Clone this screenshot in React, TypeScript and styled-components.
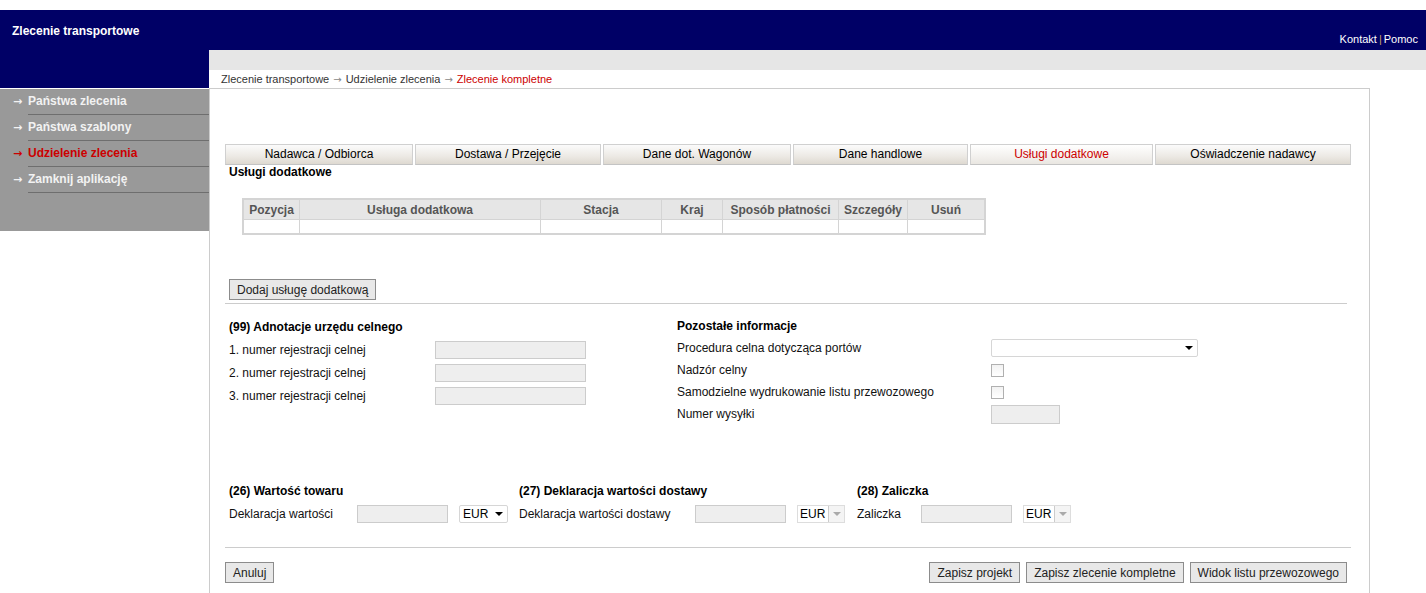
import styled, {createGlobalStyle} from 'styled-components';

const GlobalStyle = createGlobalStyle`
  html, body {
    margin: 0;
    padding: 0;
    background: #fff;
  }
  body {
    font-family: "Liberation Sans", Arial, sans-serif;
    font-size: 12px;
    color: #000;
  }
`;

const NAVY = '#000066';
const RED = '#cc0000';

const Page = styled.div`
  padding-top: 10px;
  min-height: 583px;
  display: grid;
  grid-template-columns: 209px 1fr;
  grid-template-rows: 40px 20px 18px 1fr;
`;

const Brand = styled.div`
  grid-row: 1 / 4;
  background: ${NAVY};
  color: #fff;
  font-weight: bold;
  padding: 14px 0 0 12px;
  line-height: 14px;
`;

const TopBar = styled.div`
  background: ${NAVY};
  display: flex;
  justify-content: flex-end;
  align-items: flex-end;
  padding: 0 8px 4px 0;
  color: #fff;
  font-size: 11px;
  line-height: 13px;
`;

const TopLink = styled.span`
  color: #fff;
`;

const Pipe = styled.span`
  color: #c8a060;
  margin: 0 2px;
`;

const GrayBar = styled.div`
  background: #e6e6e6;
`;

const Breadcrumb = styled.div`
  padding-left: 12px;
  font-size: 11px;
  line-height: 18px;
  color: #333;
`;

const Crumb = styled.span<{current?: boolean}>`
  color: ${p => (p.current ? RED : '#333')};
`;

const CrumbArrow = styled.span`
  font-family: "DejaVu Sans", sans-serif;
  font-size: 10px;
  color: #888;
  margin: 0 4px;
`;

const Sidebar = styled.nav`
  align-self: start;
  background: #999;
  border-top: 1px solid #fff;
  height: 142px;
`;

const MenuItem = styled.div<{active?: boolean}>`
  display: flex;
  height: 26px;
  padding-left: 13px;
  color: ${p => (p.active ? RED : '#f2f2f2')};
  font-weight: bold;
`;

const MenuArrow = styled.span`
  width: 15px;
  line-height: 25px;
  font-family: "DejaVu Sans", sans-serif;
  font-size: 11px;
`;

const MenuLabel = styled.span`
  flex: 1;
  line-height: 25px;
  border-bottom: 1px solid #6e6e6e;
`;

const Content = styled.main`
  box-sizing: border-box;
  width: 1161px;
  border: 1px solid #ccc;
  border-bottom: none;
  padding: 55px 17px 0 15px;
`;

const Tabs = styled.div`
  display: flex;
  gap: 2px;
`;

const Tab = styled.div<{w: number; active?: boolean}>`
  box-sizing: border-box;
  width: ${p => p.w}px;
  height: 21px;
  border: 1px solid #d0d0d0;
  border-bottom-color: #c4c4c4;
  background: ${p =>
    p.active
      ? 'linear-gradient(#ffffff, #f3f1ee 60%, #e9e6e1)'
      : 'linear-gradient(#fbfbfb, #ece9e4 60%, #ded9d1)'};
  color: ${p => (p.active ? RED : '#000')};
  text-align: center;
  line-height: 19px;
`;

const SectionTitle = styled.div`
  font-weight: bold;
  line-height: 14px;
  padding-left: 4px;
`;

const Table = styled.table`
  margin: 19px 0 0 17px;
  border-collapse: collapse;
  border: 2px solid #d4d4d4;
  table-layout: fixed;
`;

const Th = styled.th<{w: number}>`
  width: ${p => p.w}px;
  height: 19px;
  padding: 0;
  background: #e6e6e6;
  border: 1px solid #d4d4d4;
  color: #555;
  font-weight: bold;
  font-size: 12px;
`;

const Td = styled.td`
  height: 13px;
  padding: 0;
  border: 1px solid #d4d4d4;
`;

const Button = styled.button`
  box-sizing: border-box;
  height: 21px;
  padding: 0 7px;
  background: #e8e8e8;
  border: 1px solid #8c8c8c;
  border-radius: 0;
  font-family: inherit;
  font-size: 12px;
  color: #222;
`;

const AddRow = styled.div`
  margin-top: 44px;
  padding-left: 4px;
`;

const Rule = styled.hr<{w: number}>`
  width: ${p => p.w}px;
  margin: 0;
  border: none;
  border-top: 1px solid #ccc;
`;

const Columns = styled.div`
  display: grid;
  grid-template-columns: 448px 1fr;
  padding: 11px 0 0 4px;
`;

const Fields = styled.div<{label: number; row: number}>`
  display: grid;
  grid-template-columns: ${p => p.label}px auto;
  grid-auto-rows: ${p => p.row}px;
  align-items: center;
  justify-items: start;
`;

const FieldsTitle = styled.div`
  grid-column: 1 / 3;
  font-weight: bold;
`;

const Label = styled.span`
  color: #111;
  white-space: nowrap;
`;

const TextInput = styled.div<{w: number}>`
  box-sizing: border-box;
  width: ${p => p.w}px;
  height: 18px;
  background: #eee;
  border: 1px solid #ccc;
`;

const Select = styled.div<{w: number}>`
  box-sizing: border-box;
  width: ${p => p.w}px;
  height: 18px;
  display: flex;
  align-items: center;
  justify-content: space-between;
  background: #fff;
  border: 1px solid #d6d6d6;
  border-radius: 2px;
  padding: 0 4px 0 3px;
`;

const Caret = styled.span<{muted?: boolean}>`
  width: 0;
  height: 0;
  border-left: 4px solid transparent;
  border-right: 4px solid transparent;
  border-top: 4px solid ${p => (p.muted ? '#aaa' : '#000')};
`;

const MutedSelect = styled.div`
  display: flex;
  align-items: center;
  height: 18px;
  width: 48px;
  box-sizing: border-box;
  border: 1px solid #ddd;
  padding-left: 2px;
  background: #fff;
`;

const CaretBox = styled.span`
  margin-left: auto;
  width: 16px;
  height: 16px;
  box-sizing: border-box;
  border-left: 1px solid #ccc;
  background: #f4f4f4;
  display: flex;
  align-items: center;
  justify-content: center;
`;

const Checkbox = styled.span`
  box-sizing: border-box;
  width: 13px;
  height: 13px;
  border: 1px solid #b0b0b0;
  background: linear-gradient(#f2f2f2, #ffffff);
`;

const ValueRow = styled.div`
  display: flex;
  padding: 56px 0 0 4px;
`;

const ValueGroup = styled.div`
  display: grid;
  grid-template-rows: 20px 26px;
  align-items: center;
  margin-right: 12px;
`;

const ValueFields = styled.div<{label: number}>`
  display: grid;
  grid-template-columns: ${p => p.label}px 90px 48px;
  column-gap: 12px;
  align-items: center;
  & > :first-child {
    margin-right: -12px;
  }
`;

const Footer = styled.div`
  display: flex;
  justify-content: space-between;
  padding: 14px 5px 0 0;
`;

const FooterRight = styled.div`
  display: flex;
  gap: 6px;
`;

const tabs = [
  {label: 'Nadawca / Odbiorca', w: 188},
  {label: 'Dostawa / Przejęcie', w: 186},
  {label: 'Dane dot. Wagonów', w: 188},
  {label: 'Dane handlowe', w: 175},
  {label: 'Usługi dodatkowe', w: 183, active: true},
  {label: 'Oświadczenie nadawcy', w: 196},
];

const columns = [
  {label: 'Pozycja', w: 55},
  {label: 'Usługa dodatkowa', w: 240},
  {label: 'Stacja', w: 120},
  {label: 'Kraj', w: 60},
  {label: 'Sposób płatności', w: 115},
  {label: 'Szczegóły', w: 68},
  {label: 'Usuń', w: 76},
];

const menu = [
  {label: 'Państwa zlecenia'},
  {label: 'Państwa szablony'},
  {label: 'Udzielenie zlecenia', active: true},
  {label: 'Zamknij aplikację'},
];

export default function App() {
  return (
    <>
      <GlobalStyle />
      <Page>
        <Brand>Zlecenie transportowe</Brand>
        <TopBar>
          <TopLink>Kontakt</TopLink>
          <Pipe>|</Pipe>
          <TopLink>Pomoc</TopLink>
        </TopBar>
        <GrayBar />
        <Breadcrumb>
          <Crumb>Zlecenie transportowe</Crumb>
          <CrumbArrow>→</CrumbArrow>
          <Crumb>Udzielenie zlecenia</Crumb>
          <CrumbArrow>→</CrumbArrow>
          <Crumb current>Zlecenie kompletne</Crumb>
        </Breadcrumb>

        <Sidebar>
          {menu.map(item => (
            <MenuItem key={item.label} active={item.active}>
              <MenuArrow>→</MenuArrow>
              <MenuLabel>{item.label}</MenuLabel>
            </MenuItem>
          ))}
        </Sidebar>

        <Content>
          <Tabs>
            {tabs.map(t => (
              <Tab key={t.label} w={t.w} active={t.active}>
                {t.label}
              </Tab>
            ))}
          </Tabs>
          <SectionTitle>Usługi dodatkowe</SectionTitle>

          <Table>
            <thead>
              <tr>
                {columns.map(c => (
                  <Th key={c.label} w={c.w}>{c.label}</Th>
                ))}
              </tr>
            </thead>
            <tbody>
              <tr>
                {columns.map(c => (
                  <Td key={c.label} />
                ))}
              </tr>
            </tbody>
          </Table>

          <AddRow>
            <Button>Dodaj usługę dodatkową</Button>
          </AddRow>
          <Rule w={1122} style={{marginTop: 3}} />

          <Columns>
            <Fields label={206} row={23}>
              <FieldsTitle>(99) Adnotacje urzędu celnego</FieldsTitle>
              <Label>1. numer rejestracji celnej</Label>
              <TextInput w={151} />
              <Label>2. numer rejestracji celnej</Label>
              <TextInput w={151} />
              <Label>3. numer rejestracji celnej</Label>
              <TextInput w={151} />
            </Fields>
            <Fields label={314} row={22}>
              <FieldsTitle>Pozostałe informacje</FieldsTitle>
              <Label>Procedura celna dotycząca portów</Label>
              <Select w={207}>
                <span />
                <Caret />
              </Select>
              <Label>Nadzór celny</Label>
              <Checkbox />
              <Label>Samodzielne wydrukowanie listu przewozowego</Label>
              <Checkbox />
              <Label>Numer wysyłki</Label>
              <TextInput w={69} style={{height: 19}} />
            </Fields>
          </Columns>

          <ValueRow>
            <ValueGroup>
              <SectionTitle style={{paddingLeft: 0}}>(26) Wartość towaru</SectionTitle>
              <ValueFields label={116}>
                <Label>Deklaracja wartości</Label>
                <TextInput w={91} />
                <Select w={49}>
                  <span>EUR</span>
                  <Caret />
                </Select>
              </ValueFields>
            </ValueGroup>
            <ValueGroup>
              <SectionTitle style={{paddingLeft: 0}}>(27) Deklaracja wartości dostawy</SectionTitle>
              <ValueFields label={164}>
                <Label>Deklaracja wartości dostawy</Label>
                <TextInput w={91} />
                <MutedSelect>
                  <span>EUR</span>
                  <CaretBox>
                    <Caret muted />
                  </CaretBox>
                </MutedSelect>
              </ValueFields>
            </ValueGroup>
            <ValueGroup>
              <SectionTitle style={{paddingLeft: 0}}>(28) Zaliczka</SectionTitle>
              <ValueFields label={52}>
                <Label>Zaliczka</Label>
                <TextInput w={91} />
                <MutedSelect>
                  <span>EUR</span>
                  <CaretBox>
                    <Caret muted />
                  </CaretBox>
                </MutedSelect>
              </ValueFields>
            </ValueGroup>
          </ValueRow>

          <Rule w={1126} style={{marginTop: 20}} />

          <Footer>
            <Button>Anuluj</Button>
            <FooterRight>
              <Button>Zapisz projekt</Button>
              <Button>Zapisz zlecenie kompletne</Button>
              <Button>Widok listu przewozowego</Button>
            </FooterRight>
          </Footer>
        </Content>
      </Page>
    </>
  );
}
